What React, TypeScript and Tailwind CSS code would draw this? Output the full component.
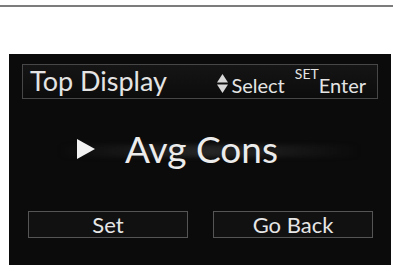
import React from "react";

const font = { fontFamily: "Lato, 'Open Sans', sans-serif" };

function UpDown() {
  return (
    <svg width="13" height="21" viewBox="0 0 13 21" className="mb-[1px] mr-[2px]">
      <path d="M6.5 1 L12 9.5 L1 9.5 Z" fill="#d8d8d8" />
      <path d="M1 11.5 L12 11.5 L6.5 20 Z" fill="#d8d8d8" />
    </svg>
  );
}

function Button({ label }: { label: string }) {
  return (
    <div className="flex h-[27px] w-[160px] items-center justify-center border border-[#555] bg-[#111] text-[22px] leading-none text-[#e6e6e6]">
      {label}
    </div>
  );
}

export default function App() {
  return (
    <div className="h-[265px] w-[393px] overflow-hidden bg-white" style={font}>
      <div className="mt-[5px] h-[2px] bg-[#7c7c7c]" />
      <div className="ml-[9px] mt-[47px] h-[211px] w-[382px] bg-[#0b0b0b] pt-[10px]">
        {/* header */}
        <div className="mx-[13px] flex h-[35px] items-center border border-[#474747] bg-gradient-to-b from-[#151515] to-[#0c0c0c] pl-[7px] pr-[11px] text-[#e4e4e4]">
          <span className="-mt-[3px] text-[27px] leading-none">Top Display</span>
          <div className="ml-auto flex items-end pt-[4px]">
            <UpDown />
            <span className="text-[20px] leading-none">Select</span>
            <span className="ml-[10px] -mt-[6px] self-start text-[14px] leading-none">SET</span>
            <span className="text-[20px] leading-none">Enter</span>
          </div>
        </div>

        {/* current item */}
        <div className="relative mt-[28px] flex h-[42px] items-center">
          <div className="absolute left-[50px] top-[18px] h-[12px] w-[300px] bg-gradient-to-r from-transparent via-[#262626] to-transparent blur-[2px]" />
          <svg width="20" height="22" viewBox="0 0 20 22" className="relative ml-[67px] mt-[2px]" style={{ filter: "blur(0.6px)" }}>
            <path d="M1 1 L19 11 L1 21 Z" fill="#f2f2f2" />
          </svg>
          <span className="relative ml-[29px] text-[37px] leading-none text-[#ececec]">Avg Cons</span>
        </div>

        {/* buttons */}
        <div className="mt-[42px] flex pl-[19px]">
          <Button label="Set" />
          <div className="ml-[25px]">
            <Button label="Go Back" />
          </div>
        </div>
      </div>
    </div>
  );
}
